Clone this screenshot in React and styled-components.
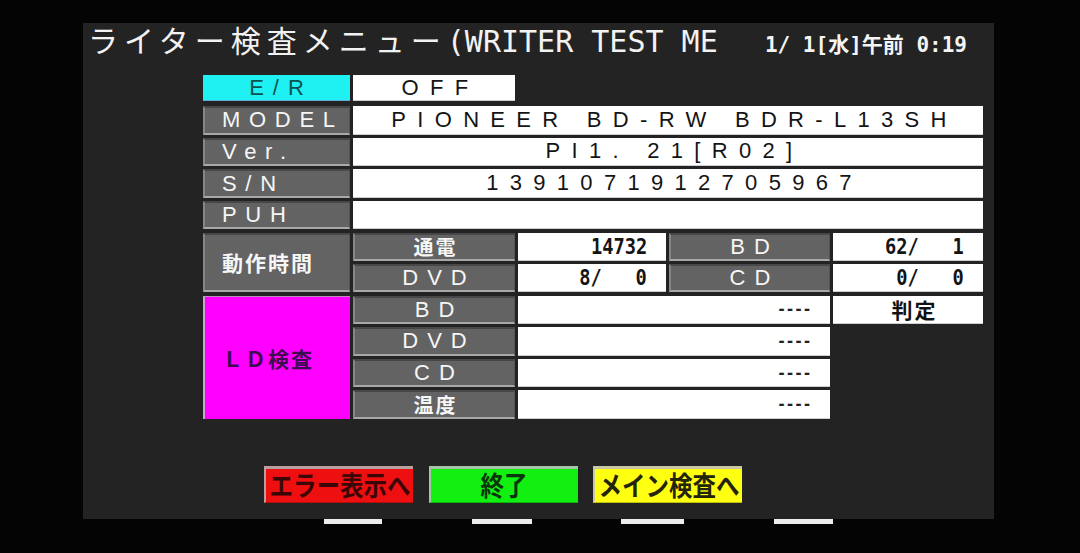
import React from 'react';
import styled, { createGlobalStyle, css } from 'styled-components';

const GlobalStyle = createGlobalStyle`
  html, body { margin: 0; padding: 0; background: #040404; }
  body {
    width: 1080px;
    height: 553px;
    overflow: hidden;
    font-family: "Noto Sans CJK JP", "Liberation Sans", sans-serif;
  }
`;

const Screen = styled.div`
  width: 1080px;
  height: 553px;
  box-sizing: border-box;
  padding: 23px 0 0 83px;
  display: flex;
  flex-direction: column;
`;

const Panel = styled.main`
  width: 911px;
  height: 496px;
  box-sizing: border-box;
  background: #232323;
  display: flex;
  flex-direction: column;
`;

const Header = styled.header`
  height: 52px;
  display: flex;
  align-items: baseline;
  padding: 0 27px 0 5px;
  color: #f2f2f2;
`;

const Title = styled.h1`
  margin: 0;
  font-weight: 400;
  white-space: pre;
  line-height: 30px;
`;

const TitleJa = styled.span`
  font-family: "Noto Sans CJK JP", sans-serif;
  font-size: 30px;
  letter-spacing: 6px;
`;

const TitleEn = styled.span`
  font-family: "DejaVu Sans Mono", monospace;
  font-size: 30px;
`;

const Clock = styled.span`
  margin-left: auto;
  font-family: "DejaVu Sans Mono", "Noto Sans CJK JP", monospace;
  font-size: 21px;
  font-weight: 700;
  white-space: pre;
  color: #f4f4f4;
`;

const Table = styled.section`
  margin-left: 120px;
  width: 780px;
  display: grid;
  grid-template-columns: 147px 162px 148px 161px 150px;
  grid-template-rows: 28px repeat(10, 28.4px);
  column-gap: 3px;
  row-gap: 3.2px;
`;

const place = css`
  grid-column: ${(p) => p.$col} / span ${(p) => p.$cs || 1};
  grid-row: ${(p) => p.$row} / span ${(p) => p.$rs || 1};
`;

const tones = {
  gray: css`
    background: #636363;
    color: #f6f6f6;
    border-top: 2px solid #474747;
    border-bottom: 2px solid #a8a8a8;
    border-left: 2px solid #868686;
    border-right: 1px solid #555;
  `,
  cyan: css`
    background: #1ff0f2;
    color: #0c5050;
    border-bottom: 1px solid #6ad;
  `,
  magenta: css`
    background: #ff00ff;
    color: #3e0b52;
    border-left: 2px solid #c8a8c8;
    border-top: 1px solid #b890b8;
  `,
};

const Label = styled.div`
  ${place}
  box-sizing: border-box;
  display: flex;
  align-items: center;
  justify-content: ${(p) => (p.$center ? 'center' : 'flex-start')};
  padding-left: ${(p) => (p.$center ? '9px' : '17px')};
  font-family: "Liberation Sans", sans-serif;
  font-size: 22px;
  letter-spacing: ${(p) => (p.$center ? '9px' : '8.7px')};
  ${(p) => tones[p.$tone || 'gray']}
  ${(p) => p.$short && css`align-self: start; height: 26px;`}
`;

const KanjiLabel = styled(Label)`
  font-family: "Noto Sans CJK JP", sans-serif;
  font-weight: 700;
  font-size: ${(p) => (p.$big ? '21px' : '20px')};
  letter-spacing: 2px;
  padding-left: ${(p) => (p.$center ? '2px' : '17px')};
`;

const Value = styled.div`
  ${place}
  box-sizing: border-box;
  background: #ffffff;
  color: #141414;
  display: flex;
  align-items: center;
  justify-content: ${(p) => (p.$right ? 'flex-end' : 'center')};
  padding: ${(p) => (p.$right ? '0 19px 0 0' : '0 0 0 13px')};
  font-family: "Liberation Sans", sans-serif;
  font-size: 22px;
  letter-spacing: 11.3px;
  white-space: pre;
  border-bottom: 1px solid #cfcfcf;
  ${(p) => p.$short && css`align-self: start; height: 26px;`}
`;

const Num = styled.span`
  display: inline-block;
  font-family: "DejaVu Sans Mono", monospace;
  font-weight: 700;
  font-size: 22px;
  letter-spacing: 0;
  white-space: pre;
  transform: scaleX(0.85);
  transform-origin: right center;
`;

const Dashes = styled.span`
  font-family: "DejaVu Sans Mono", monospace;
  font-weight: 700;
  font-size: 15px;
  letter-spacing: -0.5px;
  color: #222;
`;

const Judge = styled.span`
  font-family: "Noto Sans CJK JP", sans-serif;
  font-weight: 700;
  font-size: 21px;
  letter-spacing: 2px;
  color: #111;
`;

const ButtonRow = styled.nav`
  display: flex;
  gap: 15.5px;
  margin: 47px 0 0 181px;
`;

const Button = styled.button`
  width: 149px;
  height: 37px;
  box-sizing: border-box;
  padding: 0;
  background: ${(p) => p.$bg};
  color: ${(p) => p.$ink};
  border: none;
  border-top: 3px solid ${(p) => p.$edge};
  border-left: 2px solid ${(p) => p.$edge};
  border-bottom: 1px solid rgba(0, 0, 0, 0.25);
  display: flex;
  align-items: center;
  justify-content: center;
  overflow: hidden;
  cursor: pointer;
`;

const ButtonText = styled.span`
  display: inline-block;
  font-family: "Noto Sans CJK JP", sans-serif;
  font-weight: 700;
  font-size: 27px;
  line-height: 30px;
  white-space: nowrap;
  transform: scaleX(0.87);
`;

const Bars = styled.div`
  display: flex;
  gap: 89.5px;
  margin-left: 241px;
`;

const Bar = styled.span`
  display: block;
  height: 5px;
  background: #ededed;
`;

const infoRows = [
  { row: 2, label: 'MODEL', value: 'PIONEER BD-RW BDR-L13SH' },
  { row: 3, label: 'Ver.', value: 'PI1. 21[R02]' },
  { row: 4, label: 'S/N', value: '1391071912705967' },
  { row: 5, label: 'PUH', value: '' },
];

const ldRows = [
  { row: 8, label: 'BD' },
  { row: 9, label: 'DVD' },
  { row: 10, label: 'CD' },
  { row: 11, label: '温度', kanji: true },
];

const buttons = [
  { text: 'エラー表示へ', bg: '#ee1010', ink: '#3c0606', edge: '#b9a0a0' },
  { text: '終了', bg: '#12f012', ink: '#0b360b', edge: '#a6c4a6' },
  { text: 'メイン検査へ', bg: '#ffff12', ink: '#24240a', edge: '#c8c8a6' },
];

const barWidths = [58, 60, 63, 59];

export default function App() {
  return (
    <>
      <GlobalStyle />
      <Screen>
        <Panel>
          <Header>
            <Title>
              <TitleJa>ライター検査メニュー</TitleJa>
              <TitleEn>(WRITER TEST ME</TitleEn>
            </Title>
            <Clock>1/ 1[水]午前 0:19</Clock>
          </Header>

          <Table>
            <Label $col={1} $row={1} $tone="cyan" $center $short>E/R</Label>
            <Value $col={2} $row={1} $short>OFF</Value>

            {infoRows.map((r) => (
              <React.Fragment key={r.label}>
                <Label $col={1} $row={r.row}>{r.label}</Label>
                <Value $col={2} $cs={4} $row={r.row}>{r.value}</Value>
              </React.Fragment>
            ))}

            <KanjiLabel $col={1} $row={6} $rs={2} $big>動作時間</KanjiLabel>
            <KanjiLabel $col={2} $row={6} $center>通電</KanjiLabel>
            <Value $col={3} $row={6} $right><Num>14732</Num></Value>
            <Label $col={4} $row={6} $center>BD</Label>
            <Value $col={5} $row={6} $right><Num>62/   1</Num></Value>

            <Label $col={2} $row={7} $center>DVD</Label>
            <Value $col={3} $row={7} $right><Num> 8/   0</Num></Value>
            <Label $col={4} $row={7} $center>CD</Label>
            <Value $col={5} $row={7} $right><Num> 0/   0</Num></Value>

            <KanjiLabel $col={1} $row={8} $rs={4} $tone="magenta" $big>ＬＤ検査</KanjiLabel>
            {ldRows.map((r) => (
              <React.Fragment key={r.row}>
                {r.kanji ? (
                  <KanjiLabel $col={2} $row={r.row} $center>{r.label}</KanjiLabel>
                ) : (
                  <Label $col={2} $row={r.row} $center>{r.label}</Label>
                )}
                <Value $col={3} $cs={2} $row={r.row} $right><Dashes>----</Dashes></Value>
              </React.Fragment>
            ))}
            <Value $col={5} $row={8}><Judge>判定</Judge></Value>
          </Table>

          <ButtonRow>
            {buttons.map((b) => (
              <Button key={b.text} $bg={b.bg} $ink={b.ink} $edge={b.edge}>
                <ButtonText>{b.text}</ButtonText>
              </Button>
            ))}
          </ButtonRow>
        </Panel>
        <Bars>
          {barWidths.map((w, i) => (
            <Bar key={i} style={{ width: w }} />
          ))}
        </Bars>
      </Screen>
    </>
  );
}
